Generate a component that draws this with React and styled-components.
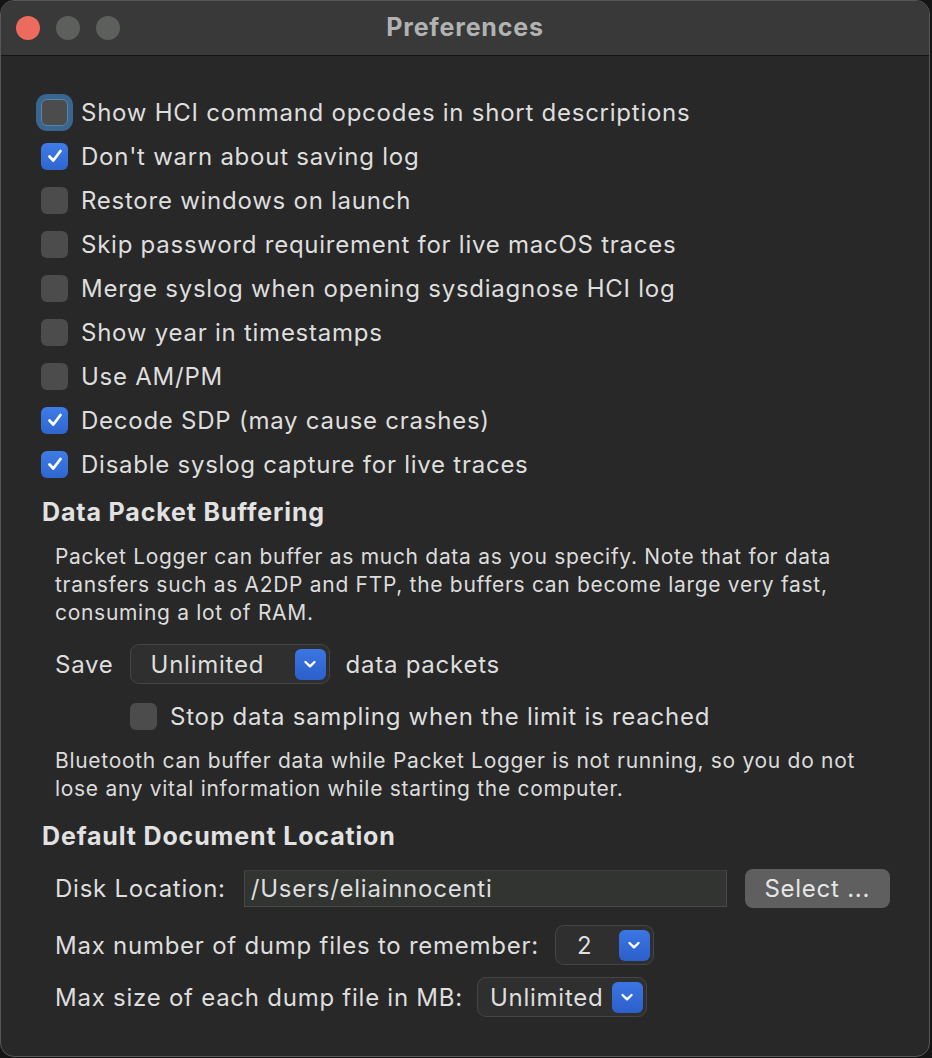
import styled, { createGlobalStyle } from "styled-components";

const Global = createGlobalStyle`
  html, body {
    margin: 0;
    padding: 0;
    background: #151515;
  }
  body {
    font-family: Inter, "Liberation Sans", sans-serif;
    -webkit-font-smoothing: antialiased;
  }
`;

const Window = styled.div`
  width: 930px;
  height: 1057px;
  box-sizing: border-box;
  border: 1px solid #555655;
  border-radius: 14px;
  overflow: hidden;
  background: #282828;
  display: flex;
  flex-direction: column;
`;

const TitleBar = styled.div`
  height: 54px;
  flex: none;
  background: #383938;
  border-bottom: 1px solid #141414;
  display: grid;
  grid-template-columns: 1fr auto 1fr;
  align-items: center;
  padding: 0 15px;
`;

const Lights = styled.div`
  display: flex;
  gap: 16px;
`;

const Light = styled.span`
  width: 24px;
  height: 24px;
  border-radius: 50%;
  background: ${(p) => p.$color};
`;

const Title = styled.div`
  font-size: 25px;
  font-weight: 700;
  color: #b1b2b1;
  letter-spacing: 0.8px;
  margin-top: -2px;
`;

const Content = styled.div`
  display: flex;
  flex-direction: column;
  padding: 34px 0 0;
  color: #dedede;
`;

const CheckRow = styled.label`
  display: flex;
  align-items: center;
  gap: 13px;
  height: 44px;
  padding-left: ${(p) => p.$indent || 40}px;
  margin-top: ${(p) => p.$mt || 0}px;
  font-size: 24px;
  letter-spacing: 0.75px;
`;

const Box = styled.span`
  width: 27px;
  height: 27px;
  flex: none;
  box-sizing: border-box;
  border-radius: 6px;
  display: flex;
  align-items: center;
  justify-content: center;
  background: ${(p) =>
    p.$checked ? "linear-gradient(#3e7ce6, #2f66d0)" : "#4b4c4b"};
  border: ${(p) => (p.$focus ? "1px solid #5b83aa" : "none")};
  box-shadow: ${(p) => (p.$focus ? "0 0 0 5px #39668f" : "none")};
`;

const Heading = styled.h2`
  margin: ${(p) => p.$mt}px 0 0 41px;
  font-size: 25px;
  line-height: 32px;
  font-weight: 700;
  color: #e2e2e2;
  letter-spacing: 0.85px;
`;

const Para = styled.p`
  margin: ${(p) => p.$mt}px 0 0 54px;
  font-size: 21px;
  line-height: 28px;
  color: #dcdcdc;
  width: 820px;
  letter-spacing: 0.7px;
`;

const FieldRow = styled.div`
  display: flex;
  align-items: center;
  gap: ${(p) => p.$gap || 16}px;
  margin-top: ${(p) => p.$mt}px;
  padding-left: 54px;
  height: 40px;
  font-size: 24px;
  letter-spacing: 0.75px;
`;

const Popup = styled.div`
  width: ${(p) => p.$w}px;
  height: 40px;
  box-sizing: border-box;
  border: 1px solid #444544;
  border-radius: 9px;
  background: #2e2f2e;
  display: flex;
  align-items: center;
  padding: 0 3px 0 ${(p) => p.$pad}px;
`;

const PopupLabel = styled.span`
  flex: 1;
`;

const Stepper = styled.span`
  width: 31px;
  height: 31px;
  border-radius: 6px;
  background: linear-gradient(#3b76e2, #2c5fcb);
  display: flex;
  align-items: center;
  justify-content: center;
`;

const PathField = styled.div`
  width: 483px;
  height: 37px;
  box-sizing: border-box;
  background: #323432;
  border: 1px solid #484948;
  border-top-color: #3d3e3d;
  display: flex;
  align-items: center;
  padding-left: 6px;
  margin-left: 2px;
`;

const Button = styled.button`
  width: 145px;
  height: 39px;
  margin-left: 2px;
  border: none;
  border-radius: 8px;
  background: #5f5f5f;
  color: #e6e6e6;
  font-family: inherit;
  font-size: 24px;
  letter-spacing: 0.75px;
  padding: 0;
`;

const Check = () => (
  <svg width="18" height="18" viewBox="0 0 18 18">
    <path
      d="M3.5 9.5 L7.3 13.5 L14.5 4"
      fill="none"
      stroke="#fff"
      strokeWidth="2.8"
      strokeLinecap="round"
      strokeLinejoin="round"
    />
  </svg>
);

const Chevron = () => (
  <svg width="14" height="10" viewBox="0 0 14 10">
    <path
      d="M2.5 3 L7 7.3 L11.5 3"
      fill="none"
      stroke="#fff"
      strokeWidth="2.4"
      strokeLinecap="round"
      strokeLinejoin="round"
    />
  </svg>
);

const Checkbox = ({ checked, focus, children, indent, mt }) => (
  <CheckRow $indent={indent} $mt={mt}>
    <Box $checked={checked} $focus={focus}>
      {checked && <Check />}
    </Box>
    {children}
  </CheckRow>
);

const Select = ({ value, w, pad }) => (
  <Popup $w={w} $pad={pad}>
    <PopupLabel>{value}</PopupLabel>
    <Stepper>
      <Chevron />
    </Stepper>
  </Popup>
);

const options = [
  ["Show HCI command opcodes in short descriptions", false, true],
  ["Don't warn about saving log", true],
  ["Restore windows on launch", false],
  ["Skip password requirement for live macOS traces", false],
  ["Merge syslog when opening sysdiagnose HCI log", false],
  ["Show year in timestamps", false],
  ["Use AM/PM", false],
  ["Decode SDP (may cause crashes)", true],
  ["Disable syslog capture for live traces", true],
];

export default function App() {
  return (
    <>
      <Global />
      <Window>
        <TitleBar>
          <Lights>
            <Light $color="#ec6a5e" />
            <Light $color="#5d5f5d" />
            <Light $color="#5d5f5d" />
          </Lights>
          <Title>Preferences</Title>
          <span />
        </TitleBar>
        <Content>
          {options.map(([text, checked, focus]) => (
            <Checkbox key={text} checked={checked} focus={focus}>
              {text}
            </Checkbox>
          ))}

          <Heading $mt={10}>Data Packet Buffering</Heading>
          <Para $mt={15}>
            Packet Logger can buffer as much data as you specify. Note that for
            data transfers such as A2DP and FTP, the buffers can become large
            very fast, consuming a lot of RAM.
          </Para>

          <FieldRow $mt={17}>
            <span>Save</span>
            <Select value="Unlimited" w={200} pad={20} />
            <span>data packets</span>
          </FieldRow>
          <Checkbox indent={129} mt={10}>
            Stop data sampling when the limit is reached
          </Checkbox>

          <Para $mt={9}>
            Bluetooth can buffer data while Packet Logger is not running, so you
            do not lose any vital information while starting the computer.
          </Para>

          <Heading $mt={17}>Default Document Location</Heading>

          <FieldRow $mt={16}>
            <span>Disk Location:</span>
            <PathField>/Users/eliainnocenti</PathField>
            <Button>Select ...</Button>
          </FieldRow>
          <FieldRow $mt={17}>
            <span>Max number of dump files to remember:</span>
            <Select value="2" w={99} pad={21} />
          </FieldRow>
          <FieldRow $mt={12} $gap={14}>
            <span>Max size of each dump file in MB:</span>
            <Select value="Unlimited" w={170} pad={12} />
          </FieldRow>
        </Content>
      </Window>
    </>
  );
}
